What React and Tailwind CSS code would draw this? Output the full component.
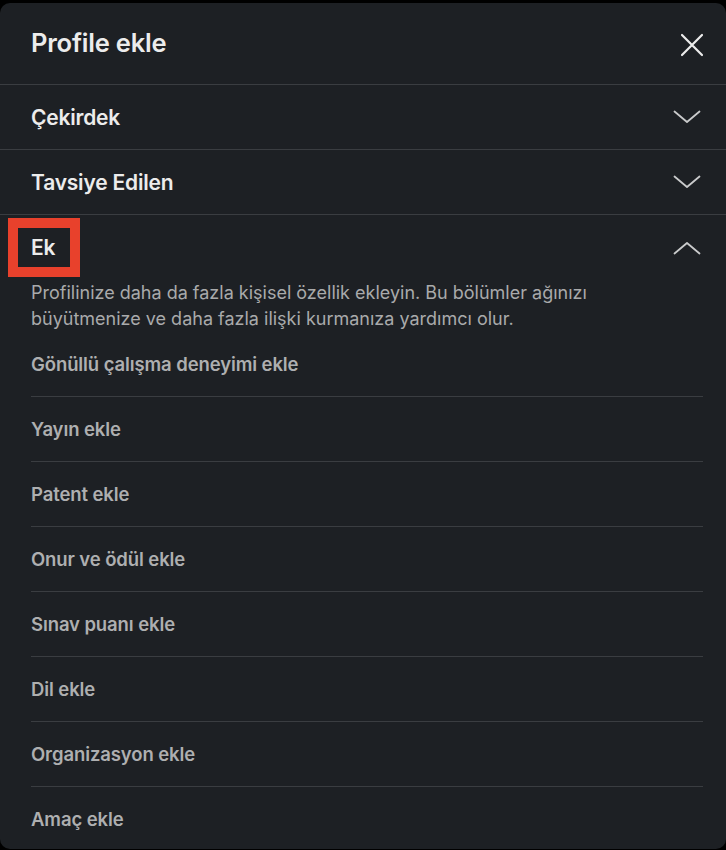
import React from "react";

const Chevron = ({ up }) => (
  <svg width="28" height="16" viewBox="0 0 28 16" fill="none" className="text-[#c9cacb]">
    <path
      d={up ? "M1.5 13.5 L14 3 L26.5 13.5" : "M1.5 2.5 L14 13 L26.5 2.5"}
      stroke="currentColor"
      strokeWidth="1.8"
      strokeLinecap="round"
      strokeLinejoin="round"
    />
  </svg>
);

const items = [
  "Gönüllü çalışma deneyimi ekle",
  "Yayın ekle",
  "Patent ekle",
  "Onur ve ödül ekle",
  "Sınav puanı ekle",
  "Dil ekle",
  "Organizasyon ekle",
  "Amaç ekle",
];

export default function App() {
  return (
    <div
      className="w-[726px] h-[850px] bg-black overflow-hidden pt-[3px]"
      style={{ fontFamily: "Inter, 'Noto Sans', sans-serif" }}
    >
      <div className="h-[846px] bg-[#1d2024] rounded-[10px] overflow-hidden flex flex-col">
        <div className="h-[82px] shrink-0 flex items-center justify-between pl-[31px] pr-[22px] border-b border-[#3a3d41]">
          <h1 className="text-[25.5px] font-semibold text-[#ececec] tracking-[-0.2px]">Profile ekle</h1>
          <svg width="24" height="24" viewBox="0 0 24 24" fill="none" className="text-[#ececec] mt-[3px]">
            <path d="M2 2 L22 22 M22 2 L2 22" stroke="currentColor" strokeWidth="2.2" strokeLinecap="round" />
          </svg>
        </div>
        <div className="h-[65px] shrink-0 flex items-center justify-between pl-[31px] pr-[25px] border-b border-[#3a3d41]">
          <span className="text-[21px] font-semibold text-[#ececec] tracking-[-0.2px] mt-[1px]">Çekirdek</span>
          <Chevron />
        </div>
        <div className="h-[65px] shrink-0 flex items-center justify-between pl-[31px] pr-[25px] border-b border-[#3a3d41]">
          <span className="text-[21px] font-semibold text-[#ececec] tracking-[-0.2px] mt-[1px]">Tavsiye Edilen</span>
          <Chevron />
        </div>
        <div className="relative h-[65px] shrink-0 flex items-center justify-between pl-[31px] pr-[25px]">
          <span className="text-[21px] font-semibold text-[#ececec] tracking-[-0.2px]">Ek</span>
          <Chevron up />
          <div className="absolute left-[8px] top-[3px] w-[72px] h-[59px] border-[10px] border-[#e8412c]" />
        </div>
        <p className="pl-[31px] pr-[24px] text-[18px] leading-[26px] text-[#a9aaab] whitespace-nowrap">
          Profilinize daha da fazla kişisel özellik ekleyin. Bu bölümler ağınızı
          <br />
          büyütmenize ve daha fazla ilişki kurmanıza yardımcı olur.
        </p>
        <div className="pr-[23px] pl-[31px]">
          {items.map((t, i) => (
            <div
              key={t}
              className={
                "h-[65px] flex items-center " +
                (i < items.length - 1 ? "border-b border-[#3a3d41]" : "")
              }
            >
              <span className="text-[18.5px] font-semibold text-[#aeafb0] tracking-[-0.1px] mt-[1px]">{t}</span>
            </div>
          ))}
        </div>
      </div>
    </div>
  );
}
